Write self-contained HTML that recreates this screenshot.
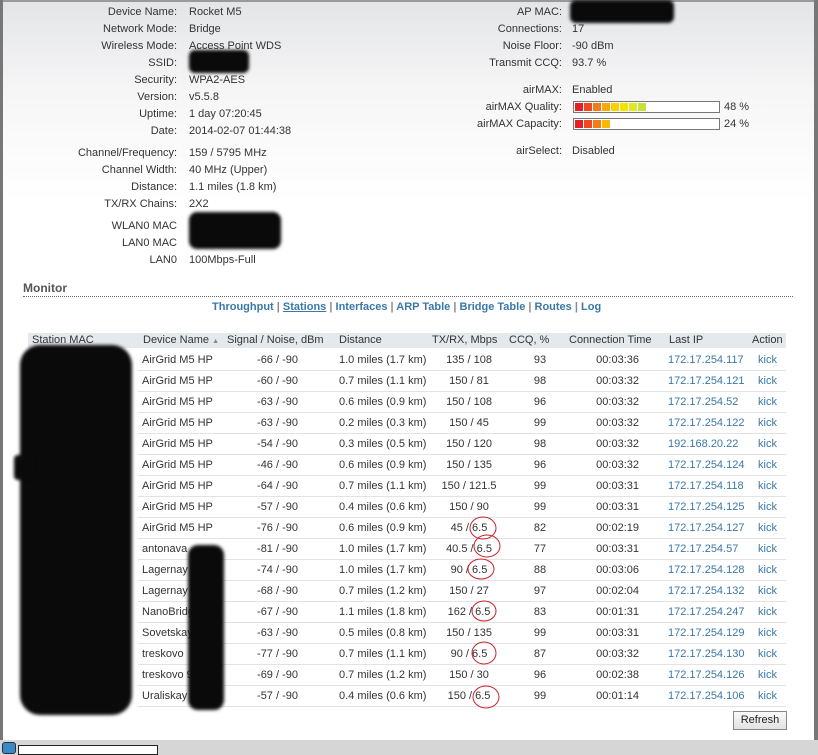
<!DOCTYPE html>
<html><head><meta charset="utf-8"><style>
*{margin:0;padding:0;box-sizing:border-box}
body{width:818px;height:751px;position:relative;overflow:hidden;background:#d6d6d6;font-family:"Liberation Sans",Arial,sans-serif;font-size:11px;color:#333}
#panel{position:absolute;left:3px;top:2px;width:811px;height:738px;background:linear-gradient(#e4e5e7 0px,#f6f6f7 90px,#fff 200px);}
#topbar{position:absolute;left:0;top:0;width:818px;height:2px;background:#9a9a9a}
#lbar{position:absolute;left:0;top:0;width:3px;height:740px;background:#777}
#rbar{position:absolute;left:814px;top:0;width:4px;height:740px;background:#777}
.t{position:absolute;white-space:nowrap;line-height:13px}
.r{text-align:right}
.a{color:#3a78a8}
.bar{position:absolute;left:573px;width:147px;height:12px;border:1px solid #777;background:#fff}
.seg{position:absolute;top:1px;width:8px;height:8px}
.hdr{position:absolute;left:28px;top:333px;width:758px;height:15px;background:#e4e9ed}
.sep{position:absolute;left:138px;width:648px;height:1px;background:#e3e3e3}
.blob{position:absolute;background:#0a0a0a;border-radius:14px;filter:blur(1.5px)}
.btn{position:absolute;left:733px;top:711px;width:54px;height:19px;border:1px solid #888;background:linear-gradient(#fafafa,#e2e2e2);font-size:11px;text-align:center;line-height:17px;color:#222}
</style></head><body>
<div id="panel"></div><div id="topbar"></div><div id="lbar"></div><div id="rbar"></div>

<div class="t r" style="right:641px;top:6px">Device Name:</div><div class="t" style="left:189px;top:6px">Rocket M5</div>
<div class="t r" style="right:641px;top:23px">Network Mode:</div><div class="t" style="left:189px;top:23px">Bridge</div>
<div class="t r" style="right:641px;top:40px">Wireless Mode:</div><div class="t" style="left:189px;top:40px">Access Point WDS</div>
<div class="t r" style="right:641px;top:57px">SSID:</div>
<div class="t r" style="right:641px;top:74px">Security:</div><div class="t" style="left:189px;top:74px">WPA2-AES</div>
<div class="t r" style="right:641px;top:91px">Version:</div><div class="t" style="left:189px;top:91px">v5.5.8</div>
<div class="t r" style="right:641px;top:108px">Uptime:</div><div class="t" style="left:189px;top:108px">1 day 07:20:45</div>
<div class="t r" style="right:641px;top:125px">Date:</div><div class="t" style="left:189px;top:125px">2014-02-07 01:44:38</div>
<div class="t r" style="right:641px;top:147px">Channel/Frequency:</div><div class="t" style="left:189px;top:147px">159 / 5795 MHz</div>
<div class="t r" style="right:641px;top:164px">Channel Width:</div><div class="t" style="left:189px;top:164px">40 MHz (Upper)</div>
<div class="t r" style="right:641px;top:181px">Distance:</div><div class="t" style="left:189px;top:181px">1.1 miles (1.8 km)</div>
<div class="t r" style="right:641px;top:198px">TX/RX Chains:</div><div class="t" style="left:189px;top:198px">2X2</div>
<div class="t r" style="right:641px;top:220px">WLAN0 MAC</div>
<div class="t r" style="right:641px;top:237px">LAN0 MAC</div>
<div class="t r" style="right:641px;top:254px">LAN0</div><div class="t" style="left:189px;top:254px">100Mbps-Full</div>
<div class="blob" style="left:189px;top:50px;width:60px;height:23px;border-radius:6px"></div>
<div class="blob" style="left:189px;top:212px;width:92px;height:37px;border-radius:8px"></div>

<div class="t r" style="right:256px;top:6px">AP MAC:</div>
<div class="blob" style="left:570px;top:0px;width:104px;height:23px;border-radius:6px"></div>
<div class="t r" style="right:256px;top:23px">Connections:</div><div class="t" style="left:572px;top:23px">17</div>
<div class="t r" style="right:256px;top:40px">Noise Floor:</div><div class="t" style="left:572px;top:40px">-90 dBm</div>
<div class="t r" style="right:256px;top:57px">Transmit CCQ:</div><div class="t" style="left:572px;top:57px">93.7 %</div>
<div class="t r" style="right:256px;top:84px">airMAX:</div><div class="t" style="left:572px;top:84px">Enabled</div>
<div class="t r" style="right:256px;top:101px">airMAX Quality:</div>
<div class="t r" style="right:256px;top:118px">airMAX Capacity:</div>
<div class="t r" style="right:256px;top:145px">airSelect:</div><div class="t" style="left:572px;top:145px">Disabled</div>
<div class="bar" style="top:101px">
<div class="seg" style="left:1px;background:#e41f26"></div><div class="seg" style="left:10px;background:#ef4a1f"></div><div class="seg" style="left:19px;background:#f47b19"></div><div class="seg" style="left:28px;background:#f8a90e"></div><div class="seg" style="left:37px;background:#fbd000"></div><div class="seg" style="left:46px;background:#f3e400"></div><div class="seg" style="left:55px;background:#e0e824"></div><div class="seg" style="left:64px;background:#c9e03c"></div></div>
<div class="t" style="left:724px;top:101px">48 %</div>
<div class="bar" style="top:118px">
<div class="seg" style="left:1px;background:#e41f26"></div><div class="seg" style="left:10px;background:#ef4a1f"></div><div class="seg" style="left:19px;background:#f47b19"></div><div class="seg" style="left:28px;background:#f8b80a"></div></div>
<div class="t" style="left:724px;top:118px">24 %</div>

<div class="t" style="left:23px;top:282px;font-size:12px;font-weight:bold;color:#555">Monitor</div>
<div style="position:absolute;left:23px;top:296px;width:770px;border-top:1px dotted #666"></div>
<div class="t" style="left:212px;top:301px;font-weight:bold;color:#888"><span class="a">Throughput</span> | <span class="a" style="text-decoration:underline">Stations</span> | <span class="a">Interfaces</span> | <span class="a">ARP Table</span> | <span class="a">Bridge Table</span> | <span class="a">Routes</span> | <span class="a">Log</span></div>

<div class="hdr"></div>
<div class="t" style="left:32px;top:334px">Station MAC</div>
<div class="t" style="left:143px;top:334px">Device Name <span style="font-size:7px;color:#888">▲</span></div>
<div class="t" style="left:227px;top:334px">Signal / Noise, dBm</div>
<div class="t" style="left:339px;top:334px">Distance</div>
<div class="t" style="left:432px;top:334px">TX/RX, Mbps</div>
<div class="t" style="left:509px;top:334px">CCQ, %</div>
<div class="t" style="left:569px;top:334px">Connection Time</div>
<div class="t" style="left:669px;top:334px">Last IP</div>
<div class="t" style="left:752px;top:334px">Action</div>

<div id="rows"></div>
<script>
var d=[["AirGrid M5 HP","-66 / -90","1.0 miles (1.7 km)","135 / 108","93","00:03:36","172.17.254.117"],
["AirGrid M5 HP","-60 / -90","0.7 miles (1.1 km)","150 / 81","98","00:03:32","172.17.254.121"],
["AirGrid M5 HP","-63 / -90","0.6 miles (0.9 km)","150 / 108","96","00:03:32","172.17.254.52"],
["AirGrid M5 HP","-63 / -90","0.2 miles (0.3 km)","150 / 45","99","00:03:32","172.17.254.122"],
["AirGrid M5 HP","-54 / -90","0.3 miles (0.5 km)","150 / 120","98","00:03:32","192.168.20.22"],
["AirGrid M5 HP","-46 / -90","0.6 miles (0.9 km)","150 / 135","96","00:03:32","172.17.254.124"],
["AirGrid M5 HP","-64 / -90","0.7 miles (1.1 km)","150 / 121.5","99","00:03:31","172.17.254.118"],
["AirGrid M5 HP","-57 / -90","0.4 miles (0.6 km)","150 / 90","99","00:03:31","172.17.254.125"],
["AirGrid M5 HP","-76 / -90","0.6 miles (0.9 km)","45 / 6.5","82","00:02:19","172.17.254.127"],
["antonava","-81 / -90","1.0 miles (1.7 km)","40.5 / 6.5","77","00:03:31","172.17.254.57"],
["Lagernay","-74 / -90","1.0 miles (1.7 km)","90 / 6.5","88","00:03:06","172.17.254.128"],
["Lagernay","-68 / -90","0.7 miles (1.2 km)","150 / 27","97","00:02:04","172.17.254.132"],
["NanoBridge","-67 / -90","1.1 miles (1.8 km)","162 / 6.5","83","00:01:31","172.17.254.247"],
["Sovetskay","-63 / -90","0.5 miles (0.8 km)","150 / 135","99","00:03:31","172.17.254.129"],
["treskovo","-77 / -90","0.7 miles (1.1 km)","90 / 6.5","87","00:03:32","172.17.254.130"],
["treskovo 9","-69 / -90","0.7 miles (1.2 km)","150 / 30","96","00:02:38","172.17.254.126"],
["Uraliskay","-57 / -90","0.4 miles (0.6 km)","150 / 6.5","99","00:01:14","172.17.254.106"]];
var h="";
d.forEach(function(r,i){var y=354+21*i;
h+='<div class="t" style="left:142px;top:'+y+'px">'+r[0]+'</div>';
h+='<div class="t r" style="right:520px;top:'+y+'px">'+r[1]+'</div>';
h+='<div class="t" style="left:339px;top:'+y+'px">'+r[2]+'</div>';
h+='<div class="t" style="left:419px;width:100px;text-align:center;top:'+y+'px">'+r[3]+'</div>';
h+='<div class="t" style="left:525px;width:30px;text-align:center;top:'+y+'px">'+r[4]+'</div>';
h+='<div class="t r" style="right:179px;top:'+y+'px">'+r[5]+'</div>';
h+='<div class="t a" style="left:668px;top:'+y+'px">'+r[6]+'</div>';
h+='<div class="t a" style="left:758px;top:'+y+'px">kick</div>';
h+='<div class="sep" style="top:'+(y+16)+'px"></div>';
});
document.getElementById("rows").innerHTML=h;
</script>
<div class="blob" style="left:20px;top:345px;width:112px;height:370px;border-radius:20px"></div>
<div class="blob" style="left:14px;top:455px;width:20px;height:25px;border-radius:4px"></div>
<div class="blob" style="left:188px;top:545px;width:36px;height:165px;border-radius:10px"></div>
<svg style="position:absolute;left:0;top:0" width="818" height="751" fill="none" stroke="#c8232c" stroke-width="1">
<ellipse cx="483" cy="528" rx="13" ry="11"/><ellipse cx="487" cy="546" rx="13" ry="11"/><ellipse cx="481" cy="569" rx="13" ry="10"/>
<ellipse cx="484" cy="611" rx="12" ry="10"/><ellipse cx="484" cy="653" rx="12" ry="11"/><ellipse cx="486" cy="697" rx="13" ry="11"/>
</svg>
<div class="btn">Refresh</div>
<div style="position:absolute;left:2px;top:742px;width:14px;height:12px;background:#3a8ac8;border:1px solid #234;border-radius:3px"></div>
<div style="position:absolute;left:18px;top:745px;width:140px;height:10px;border:1px solid #222;background:#fff"></div>
</body></html>
